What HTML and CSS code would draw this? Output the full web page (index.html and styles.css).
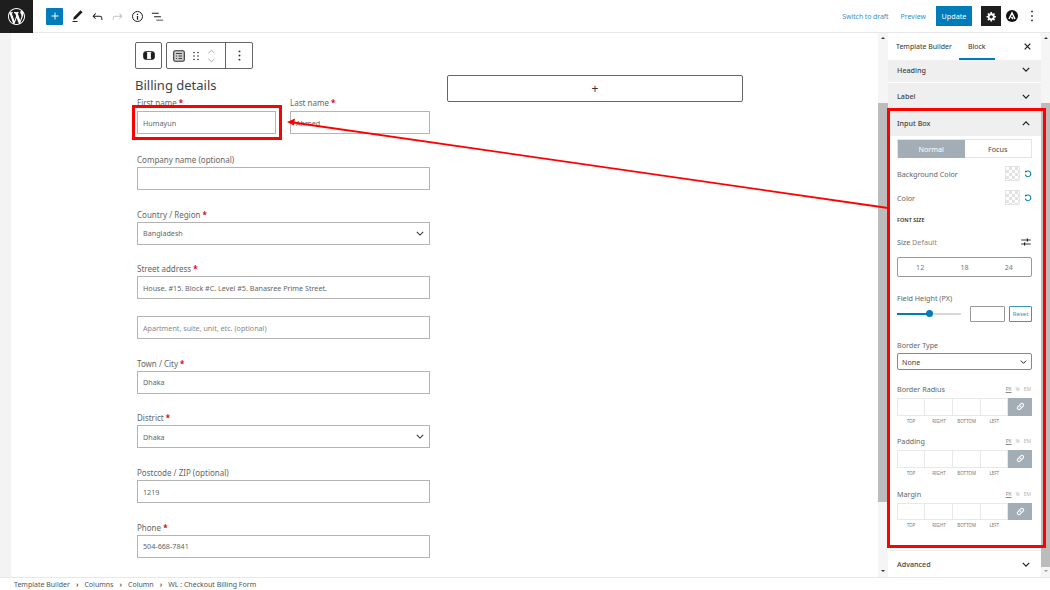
FILE: index.html
```html
<!DOCTYPE html>
<html lang="en">
<head>
<meta charset="utf-8">
<title>Edit Template</title>
<link rel="stylesheet" href="styles.css">
</head>
<body>
<div class="app">
  <header class="topbar">
    <div class="wp-logo"><svg viewBox="0 0 20 20" width="20" height="20"><path fill="#fff" d="M20 10c0-5.51-4.49-10-10-10C4.48 0 0 4.49 0 10c0 5.52 4.48 10 10 10 5.51 0 10-4.48 10-10zM7.78 15.37L4.37 6.22c.55-.02 1.17-.08 1.17-.08.5-.06.44-1.13-.06-1.11 0 0-1.45.11-2.37.11-.18 0-.37 0-.58-.01C4.12 2.69 6.87 1.11 10 1.11c2.33 0 4.45.87 6.05 2.34-.68-.11-1.65.39-1.65 1.58 0 .74.45 1.36.9 2.1.35.61.55 1.36.55 2.46 0 1.49-1.4 5-1.4 5l-3.03-8.37c.54-.02.82-.17.82-.17.5-.05.44-1.25-.06-1.22 0 0-1.44.12-2.38.12-.87 0-2.33-.12-2.33-.12-.5-.03-.56 1.2-.06 1.22l.92.08 1.26 3.41zM17.41 10c.24-.64.74-1.87.43-4.25.7 1.29 1.05 2.71 1.05 4.25 0 3.29-1.73 6.24-4.4 7.78.97-2.59 1.94-5.2 2.92-7.78zM6.1 18.09C3.12 16.65 1.11 13.53 1.11 10c0-1.3.23-2.48.72-3.59C3.25 10.3 4.67 14.2 6.1 18.09zm4.03-6.63l2.58 6.98c-.86.29-1.76.45-2.71.45-.79 0-1.57-.11-2.29-.33.81-2.38 1.62-4.74 2.42-7.1z"/></svg></div>
    <div class="tools">
      <span class="add-btn"><svg viewBox="0 0 24 24" width="14" height="14"><path fill="#fff" d="M18 11.2h-5.2V6h-1.6v5.2H6v1.6h5.2V18h1.6v-5.2H18z"/></svg></span>
      <svg class="tool" viewBox="0 0 24 24"><path fill="#1e1e1e" d="M20.1 5.1L16.9 2 6.2 12.7l-1.3 4.4 4.5-1.3L20.1 5.1zM4 20.8h8v-1.5H4v1.5z"/></svg>
      <svg class="tool" viewBox="0 0 24 24"><path fill="#1e1e1e" d="M18.3 11.7c-.6-.6-1.4-.9-2.3-.9H6.7l2.9-3.3-1.1-1-4.5 5L8.5 16l1-1-2.7-2.7H16c.5 0 .9.2 1.3.5 1 1 1 3.4 1 4.5v.3h1.5v-.2c0-1.500 0-4.300-1.500-5.700z"/></svg>
      <svg class="tool" viewBox="0 0 24 24"><path fill="#c4c4c4" d="M15.6 6.5l-1.1 1 2.9 3.3H8c-.9 0-1.7.3-2.3.9-1.4 1.5-1.4 4.2-1.4 5.6v.2h1.5v-.3c0-1.1 0-3.5 1-4.5.3-.3.7-.5 1.3-.5h9.2L14.5 15l1.1 1.1 4.6-4.6-4.6-5z"/></svg>
      <svg class="tool" viewBox="0 0 24 24"><circle cx="12" cy="12" r="8" fill="none" stroke="#1e1e1e" stroke-width="1.6"/><path fill="#1e1e1e" d="M11 11h2v6h-2zM11 7.500h2v2h-2z"/></svg>
      <svg class="tool" viewBox="0 0 24 24"><path fill="#1e1e1e" d="M3 6h11v1.5H3V6zm3.5 5.5h11V13h-11v-1.5zM21 17H10v1.5h11V17z"/></svg>
    </div>
    <div class="actions">
      <span class="link draft">Switch to draft</span>
      <span class="link preview">Preview</span>
      <span class="update">Update</span>
      <span class="gear"><svg viewBox="0 0 20 20" width="11" height="11"><path fill="#fff" d="M18 12h-2.18c-.17.7-.44 1.35-.81 1.93l1.54 1.54-2.1 2.1-1.54-1.54c-.58.36-1.23.63-1.91.79V19H8v-2.18c-.68-.16-1.33-.43-1.91-.79l-1.54 1.54-2.12-2.12 1.54-1.54c-.36-.58-.63-1.23-.79-1.91H1V9.03h2.17c.16-.7.44-1.35.8-1.94L2.43 5.55l2.1-2.1 1.54 1.54c.58-.37 1.24-.64 1.93-.81V2h3v2.18c.68.16 1.33.43 1.91.79l1.54-1.54 2.12 2.12-1.54 1.54c.36.59.64 1.24.8 1.94H18V12zm-8.5 1.5c1.66 0 3-1.34 3-3s-1.34-3-3-3-3 1.34-3 3 1.34 3 3 3z"/></svg></span>
      <svg class="astra" viewBox="0 0 24 24" width="12" height="12"><circle cx="12" cy="12" r="12" fill="#111"/><path fill="none" stroke="#fff" stroke-width="3" d="M6 18l6-12 6 12M11 14l3 4"/></svg>
      <svg class="kebab" viewBox="0 0 4 16" width="4" height="12"><circle cx="2" cy="2" r="1.3" fill="#444"/><circle cx="2" cy="8" r="1.3" fill="#444"/><circle cx="2" cy="14" r="1.3" fill="#444"/></svg>
    </div>
  </header>

  <div class="workspace">
    <main class="canvas">
      <div class="columns">
        <section class="form-col">
          <div class="block-toolbar">
            <div class="tb-box tb-single"><svg viewBox="0 0 16 12" width="12" height="9"><rect x=".8" y=".8" width="14.400" height="10.400" rx="3" fill="#fff" stroke="#1e1e1e" stroke-width="1.2"/><rect x="1" y="1" width="4.500" height="10" rx="2" fill="#1e1e1e"/><rect x="10.500" y="1" width="4.500" height="10" rx="2" fill="#1e1e1e"/></svg></div>
            <div class="tb-box tb-group">
              <div class="tb-main">
                <svg viewBox="0 0 12 12" width="12" height="12"><rect x=".7" y=".7" width="10.600" height="10.600" rx="1.500" fill="#ccc" stroke="#333" stroke-width="1.100"/><path d="M3 3.500h6M3 6h1M5.500 6H9M3 8.500h1M5.500 8.500H9" stroke="#333" stroke-width=".9"/></svg>
                <svg viewBox="0 0 6 10" width="6" height="10"><g fill="#333"><circle cx="1" cy="1.500" r=".8"/><circle cx="5" cy="1.500" r=".8"/><circle cx="1" cy="5" r=".8"/><circle cx="5" cy="5" r=".8"/><circle cx="1" cy="8.500" r=".8"/><circle cx="5" cy="8.500" r=".8"/></g></svg>
                <svg viewBox="0 0 10 18" width="9" height="18"><path d="M1.500 6L5 2.500 8.500 6M1.500 12L5 15.500 8.500 12" fill="none" stroke="#aaa" stroke-width="1.100"/></svg>
              </div>
              <div class="tb-more"><svg viewBox="0 0 4 16" width="3" height="11"><circle cx="2" cy="2" r="1.400" fill="#333"/><circle cx="2" cy="8" r="1.400" fill="#333"/><circle cx="2" cy="14" r="1.400" fill="#333"/></svg></div>
            </div>
          </div>
          <h2 class="form-title">Billing details</h2>
          <div class="name-row">
            <div class="field">
              <label class="f-label">First name <b>*</b></label>
              <div class="input">Humayun</div>
            </div>
            <div class="field">
              <label class="f-label">Last name <b>*</b></label>
              <div class="input">Ahmed</div>
            </div>
          </div>
          <div class="field row company">
            <label class="f-label">Company name (optional)</label>
            <div class="input"></div>
          </div>
          <div class="field row">
            <label class="f-label">Country / Region <b>*</b></label>
            <div class="input select">Bangladesh<svg viewBox="0 0 10 6" width="8" height="5"><path d="M1 1l4 4 4-4" fill="none" stroke="#333" stroke-width="1.300"/></svg></div>
          </div>
          <div class="field row">
            <label class="f-label">Street address <b>*</b></label>
            <div class="input">House. #15. Block #C. Level #5. Banasree Prime Street.</div>
          </div>
          <div class="field row">
            <div class="input muted">Apartment, suite, unit, etc. (optional)</div>
          </div>
          <div class="field row">
            <label class="f-label">Town / City <b>*</b></label>
            <div class="input">Dhaka</div>
          </div>
          <div class="field row">
            <label class="f-label">District <b>*</b></label>
            <div class="input select">Dhaka<svg viewBox="0 0 10 6" width="8" height="5"><path d="M1 1l4 4 4-4" fill="none" stroke="#333" stroke-width="1.300"/></svg></div>
          </div>
          <div class="field row">
            <label class="f-label">Postcode / ZIP (optional)</label>
            <div class="input">1219</div>
          </div>
          <div class="field row">
            <label class="f-label">Phone <b>*</b></label>
            <div class="input">504-668-7841</div>
          </div>
        </section>
        <section class="add-col">
          <div class="appender">+</div>
        </section>
      </div>
    </main>

    <div class="scrollbar editor-scroll">
      <i class="sb-arrow up"></i>
      <span class="sb-thumb"></span>
      <i class="sb-arrow down"></i>
    </div>

    <aside class="sidebar">
      <div class="tabs">
        <span class="tab">Template Builder</span>
        <span class="tab active">Block</span>
        <svg viewBox="0 0 10 10" width="7" height="7"><path d="M1 1l8 8M9 1L1 9" stroke="#1e1e1e" stroke-width="1.700"/></svg>
      </div>
      <div class="panel-head first">Heading<svg class="chev" viewBox="0 0 10 6"><path d="M1 1l4 4 4-4" fill="none" stroke="#1e1e1e" stroke-width="1.500"/></svg></div>
      <div class="panel-head">Label<svg class="chev" viewBox="0 0 10 6"><path d="M1 1l4 4 4-4" fill="none" stroke="#1e1e1e" stroke-width="1.500"/></svg></div>
      <div class="panel-head">Input Box<svg class="chev" viewBox="0 0 10 6"><path d="M1 5l4-4 4 4" fill="none" stroke="#1e1e1e" stroke-width="1.500"/></svg></div>
      <div class="panel-body">
        <div class="toggle"><span class="on">Normal</span><span>Focus</span></div>
        <div class="color-row bg"><span>Background Color</span><i class="swatch"></i><svg class="reset" viewBox="0 0 12 12"><path d="M3 2.500a4.300 4.300 0 1 1-1.200 4.500" fill="none" stroke="#007cba" stroke-width="1.600"/><path d="M1.300 1l3.700.500L2.300 4.500z" fill="#007cba"/></svg></div>
        <div class="color-row"><span>Color</span><i class="swatch"></i><svg class="reset" viewBox="0 0 12 12"><path d="M3 2.500a4.300 4.300 0 1 1-1.200 4.500" fill="none" stroke="#007cba" stroke-width="1.600"/><path d="M1.300 1l3.700.500L2.300 4.500z" fill="#007cba"/></svg></div>
        <div class="caps">FONT SIZE</div>
        <div class="size-row"><span>Size <em>Default</em></span><svg viewBox="0 0 12 10" width="10" height="8"><path d="M0 2.500h12M0 7.500h12" stroke="#1e1e1e" stroke-width="1.100"/><path d="M7 .5h1.500v4H7zM3.500 5.500H5v4H3.500z" fill="#1e1e1e"/></svg></div>
        <div class="sizes"><span>12</span><span>18</span><span>24</span></div>
        <div class="ctl-label height-label">Field Height (PX)</div>
        <div class="height-row">
          <div class="slider"><i class="fill"></i><i class="knob"></i></div>
          <div class="num"></div>
          <div class="reset-btn">Reset</div>
        </div>
        <div class="ctl-label type-label">Border Type</div>
        <div class="type-select">None<svg viewBox="0 0 10 6" width="7" height="4"><path d="M1 1l4 4 4-4" fill="none" stroke="#1e1e1e" stroke-width="1.500"/></svg></div>
        <div class="dim radius">
          <div class="dim-head"><span>Border Radius</span><span class="units"><u>PX</u><span>%</span><span>EM</span></span></div>
          <div class="dim-grid"><i></i><i></i><i></i><i></i><b><svg viewBox="0 0 12 12" width="9" height="9"><path d="M5 7l2-2M4.500 4.500L2.500 6.500a2 2 0 0 0 3 3l2-2M7.500 7.500l2-2a2 2 0 0 0-3-3l-2 2" fill="none" stroke="#fff" stroke-width="1.400"/></svg></b></div>
          <div class="dim-caps"><span>TOP</span><span>RIGHT</span><span>BOTTOM</span><span>LEFT</span><span></span></div>
        </div>
        <div class="dim padding">
          <div class="dim-head"><span>Padding</span><span class="units"><u>PX</u><span>%</span><span>EM</span></span></div>
          <div class="dim-grid"><i></i><i></i><i></i><i></i><b><svg viewBox="0 0 12 12" width="9" height="9"><path d="M5 7l2-2M4.500 4.500L2.500 6.500a2 2 0 0 0 3 3l2-2M7.500 7.500l2-2a2 2 0 0 0-3-3l-2 2" fill="none" stroke="#fff" stroke-width="1.400"/></svg></b></div>
          <div class="dim-caps"><span>TOP</span><span>RIGHT</span><span>BOTTOM</span><span>LEFT</span><span></span></div>
        </div>
        <div class="dim margin">
          <div class="dim-head"><span>Margin</span><span class="units"><u>PX</u><span>%</span><span>EM</span></span></div>
          <div class="dim-grid"><i></i><i></i><i></i><i></i><b><svg viewBox="0 0 12 12" width="9" height="9"><path d="M5 7l2-2M4.500 4.500L2.500 6.500a2 2 0 0 0 3 3l2-2M7.500 7.500l2-2a2 2 0 0 0-3-3l-2 2" fill="none" stroke="#fff" stroke-width="1.400"/></svg></b></div>
          <div class="dim-caps"><span>TOP</span><span>RIGHT</span><span>BOTTOM</span><span>LEFT</span><span></span></div>
        </div>
      </div>
      <div class="panel-head advanced">Advanced<svg class="chev" viewBox="0 0 10 6"><path d="M1 1l4 4 4-4" fill="none" stroke="#1e1e1e" stroke-width="1.500"/></svg></div>
    </aside>

    <div class="scrollbar side-scroll">
      <i class="sb-arrow up"></i>
      <span class="sb-thumb"></span>
      <i class="sb-arrow down light"></i>
    </div>
  </div>

  <footer class="crumbs">
    <span>Template Builder</span><i>&rsaquo;</i><span>Columns</span><i>&rsaquo;</i><span>Column</span><i>&rsaquo;</i><span>WL : Checkout Billing Form</span>
  </footer>

  <div class="mark mark-field"></div>
  <div class="mark mark-panel"></div>
  <svg class="mark-arrow" viewBox="0 0 1050 590" width="1050" height="590"><path d="M888 208L293 122.500" stroke="#f00" stroke-width="1.800" fill="none"/><path d="M287 122l8-3.500-1 7z" fill="#f00"/></svg>
</div>
</body>
</html>
```
FILE: styles.css
```css
* { box-sizing: border-box; }
html, body { margin: 0; height: 100%; }
body {
  font-family: "Noto Sans", "Open Sans", sans-serif;
  color: #444;
  background: #fff;
  overflow: hidden;
}
.app {
  position: relative;
  width: 1050px;
  height: 590px;
  display: flex;
  flex-direction: column;
  overflow: hidden;
}
.topbar {
  height: 33px;
  flex: none;
  display: flex;
  align-items: center;
  border-bottom: 1px solid #e8e8e8;
}
.wp-logo {
  width: 33px;
  height: 33px;
  background: #1e1e1e;
  display: flex;
  align-items: center;
  justify-content: center;
  margin-top: 1px;
}
.wp-logo svg { width: 17px; height: 17px; }
.tools {
  display: flex;
  align-items: center;
  margin-left: 13px;
  gap: 5px;
}
.add-btn {
  width: 17px;
  height: 17px;
  background: #007cba;
  border-radius: 1px;
  display: flex;
  align-items: center;
  justify-content: center;
  margin-right: 2px;
}
.tool { width: 15px; height: 15px; }
.actions {
  margin-left: auto;
  display: flex;
  align-items: center;
  padding-right: 16px;
}
.link { font-size: 7px; color: #3d93c4; }
.draft { margin-right: 12px; letter-spacing: -0.1px; }
.preview { margin-right: 10px; }
.update {
  width: 36px;
  height: 20px;
  background: #007cba;
  color: #fff;
  font-size: 7.200px;
  display: flex;
  align-items: center;
  justify-content: center;
  margin-right: 9px;
}
.gear {
  width: 20px;
  height: 20px;
  background: #1e1e1e;
  display: flex;
  align-items: center;
  justify-content: center;
  margin-right: 5px;
}
.astra { margin-right: 12px; }
.kebab { display: block; }

.workspace { flex: 1; display: flex; min-height: 0; }
.canvas {
  width: 878px;
  flex: none;
  padding: 9px 0 0 124px;
  background: #fff;
  border-left: 11px solid #f3f3f3;
  overflow: hidden;
}
.columns { display: flex; }
.form-col { width: 295px; flex: none; }
.add-col { width: 296px; margin-left: 17px; padding-top: 33px; }
.appender {
  height: 27px;
  border: 1px solid #666;
  border-radius: 2px;
  display: flex;
  align-items: center;
  justify-content: center;
  font-size: 12px;
  color: #333;
}
.block-toolbar { display: flex; gap: 4px; height: 27px; }
.tb-box {
  height: 27px;
  border: 1px solid #666;
  border-radius: 2px;
  display: flex;
  align-items: center;
  background: #fff;
}
.tb-single { width: 27px; justify-content: center; }
.tb-group { width: 87px; }
.tb-main {
  width: 59px;
  height: 100%;
  display: flex;
  align-items: center;
  gap: 8px;
  padding-left: 6px;
  border-right: 1px solid #666;
}
.tb-more { flex: 1; display: flex; justify-content: center; }
.form-title {
  margin: 7px 0 0;
  font-size: 13px;
  line-height: 18px;
  font-weight: 400;
  color: #3c434a;
}
.name-row {
  display: grid;
  grid-template-columns: 139px 140px;
  column-gap: 14px;
  margin: 2px 0 0 2px;
}
.name-row .f-label { line-height: 13px; }
.field { display: block; }
.row { margin: 0 0 16.700px 2px; width: 293px; }
.f-label {
  display: block;
  height: 15px;
  line-height: 15px;
  font-size: 8px;
  color: #666;
}
.f-label b { color: #e60000; font-weight: 700; }
.input {
  height: 23px;
  border: 1px solid #b4b4b4;
  background: #fff;
  font-size: 7.200px;
  color: #666;
  padding: 0 5px;
  display: flex;
  align-items: center;
  justify-content: space-between;
}
.muted { color: #888; }
.company { margin-top: 18px; }

.scrollbar {
  width: 10px;
  flex: none;
  background: #f5f5f5;
  position: relative;
  display: flex;
  flex-direction: column;
  align-items: center;
}
.sb-arrow {
  position: absolute;
  left: 50%;
  margin-left: -2px;
  width: 0;
  height: 0;
  border-left: 2px solid transparent;
  border-right: 2px solid transparent;
}
.sb-arrow.up { top: 4px; border-bottom: 2.500px solid #333; }
.sb-arrow.down { bottom: 5px; border-top: 2.500px solid #333; }
.sb-arrow.light { border-top-color: #999; }
.sb-thumb {
  width: 100%;
  margin-top: 70px;
  background: #bcbcbc;
}
.editor-scroll .sb-thumb { height: 399px; }
.side-scroll { width: 9px; }
.side-scroll .sb-thumb { height: 464px; }
.sidebar { width: 153px; flex: none; display: flex; flex-direction: column; background: #fff; }
.tabs {
  height: 27px;
  flex: none;
  display: flex;
  align-items: center;
  font-size: 7px;
  color: #333;
  padding: 0 10px 0 8px;
  background: #fff;
}
.tab { height: 27px; line-height: 27px; }
.tab.active {
  margin-left: 7px;
  padding: 0 9px;
  border-bottom: 2px solid #007cba;
}
.tabs svg { margin-left: auto; }
.panel-head {
  height: 27px;
  flex: none;
  display: flex;
  align-items: center;
  justify-content: space-between;
  padding: 0 11px 0 9px;
  font-size: 7.200px;
  font-weight: 500;
  color: #444;
  background: #efefef;
  border-bottom: 1px solid #fff;
}
.panel-head.first { height: 23px; padding-bottom: 3px; }
.chev { width: 8px; height: 5px; }
.advanced { background: #fff; border: 0; border-top: 1px solid #eee; }
.panel-body { flex: 1; padding: 2px 9px 0; font-size: 7.200px; color: #666; min-height: 0; }
.toggle {
  display: grid;
  grid-template-columns: 1fr 1fr;
  height: 19px;
  border: 1px solid #e4e4e4;
  text-align: center;
  line-height: 18px;
  color: #444;
}
.toggle .on { background: #a3adb5; color: #fff; }
.color-row {
  display: flex;
  align-items: center;
  height: 15px;
  margin-top: 9px;
}
.color-row.bg { margin-top: 8px; }
.color-row span { flex: 1; }
.swatch {
  width: 15px;
  height: 15px;
  border: 1px solid #e4e4e4;
  background: repeating-conic-gradient(#e2e2e2 0 25%, #fff 0 50%) 0 0 / 6px 6px;
}
.reset { width: 8px; height: 8px; margin-left: 4px; }
.caps { font-size: 5.500px; font-weight: 600; color: #333; margin-top: 11px; line-height: 8px; }
.size-row {
  display: flex;
  justify-content: space-between;
  align-items: center;
  margin-top: 12px;
  height: 12px;
  padding-right: 1px;
}
.size-row em { font-style: normal; color: #888; }
.sizes {
  height: 20px;
  margin-top: 9px;
  border: 1px solid #999;
  border-radius: 2px;
  display: grid;
  grid-template-columns: 1fr 1fr 1fr;
  align-items: center;
  text-align: center;
  color: #777;
}
.ctl-label { line-height: 12px; color: #666; }
.height-label { margin-top: 15px; }
.height-row { display: flex; align-items: center; margin-top: 2px; height: 16px; }
.slider {
  position: relative;
  width: 65px;
  height: 2px;
  background: #d8d8d8;
  margin-right: 8px;
}
.slider .fill { position: absolute; left: 0; top: 0; bottom: 0; width: 32px; background: #007cba; }
.slider .knob {
  position: absolute;
  left: 29px;
  top: -3px;
  width: 7px;
  height: 7px;
  border-radius: 50%;
  background: #007cba;
}
.num { width: 35px; height: 16px; border: 1px solid #999; border-radius: 1px; margin: 0 4px 0 1px; }
.reset-btn {
  width: 23px;
  height: 16px;
  border: 1px solid #3d93c4;
  border-radius: 1px;
  font-size: 6px;
  color: #3d93c4;
  display: flex;
  align-items: center;
  justify-content: center;
}
.type-label { margin-top: 17px; }
.type-select {
  height: 17px;
  margin-top: 2px;
  border: 1px solid #888;
  border-radius: 2px;
  padding: 0 4px;
  display: flex;
  align-items: center;
  justify-content: space-between;
  color: #444;
}
.dim { margin-top: 13px; }
.dim-head {
  display: flex;
  justify-content: space-between;
  align-items: center;
  height: 12px;
  color: #666;
}
.units { display: flex; gap: 4px; font-size: 5px; color: #b5b5b5; padding-right: 1px; }
.units u { color: #888; }
.dim-grid {
  display: grid;
  grid-template-columns: 28px 28px 27.500px 27.500px 1fr;
  height: 17.500px;
  margin-top: 3px;
}
.dim-grid i { border: 1px solid #e8e8e8; border-left-width: 0; }
.dim-grid i:first-child { border-left-width: 1px; }
.dim-grid b {
  background: #a3adb5;
  display: flex;
  align-items: center;
  justify-content: center;
}
.dim-caps {
  display: grid;
  grid-template-columns: 28px 28px 27.500px 27.500px 1fr;
  text-align: center;
  font-size: 4.500px;
  line-height: 8px;
  margin-top: 1px;
  color: #777;
}
.dim.padding { margin-top: 10.500px; }
.dim.margin { margin-top: 11px; }

.crumbs {
  height: 13px;
  flex: none;
  display: flex;
  align-items: center;
  padding-left: 14px;
  font-size: 7px;
  color: #555;
  border-top: 1px solid #e8e8e8;
  background: #fff;
}
.crumbs i { font-style: normal; margin: 0 6px; font-weight: 700; }

.mark { position: absolute; border: 3px solid #f00; }
.mark-field { left: 132px; top: 105px; width: 150px; height: 35px; }
.mark-panel { left: 887px; top: 108px; width: 159px; height: 440px; }
.mark-arrow { position: absolute; left: 0; top: 0; pointer-events: none; }
```
